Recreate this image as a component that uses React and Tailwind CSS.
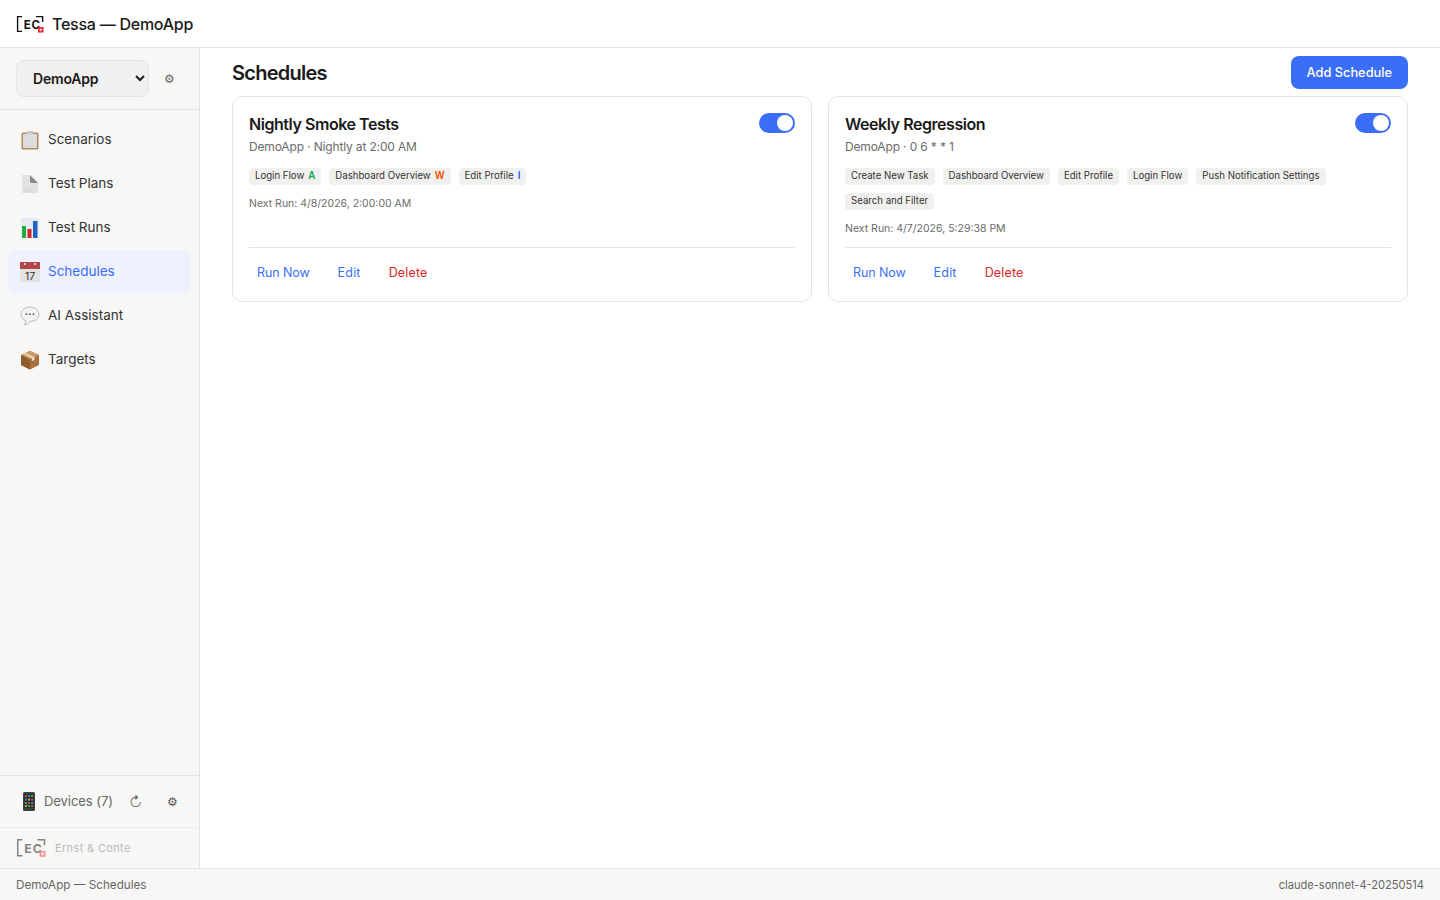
const Logo = ({ faded }) => {
  const ink = faded ? "#555" : "#111";
  const size = faded ? 30 : 28;
  return (
    <svg width={size} height={(size * 20) / 28} viewBox="0 0 28 20" className={faded ? "opacity-70" : ""}>
      <path d="M6 2.6H1.6V17.4H6" fill="none" stroke={ink} strokeWidth="1.4" />
      <path d="M20 2.6H26.6V8" fill="none" stroke={ink} strokeWidth="1.4" />
      <text x="7.8" y="14.5" fontSize="11.5" fontWeight="700" fontFamily="Inter, sans-serif" fill={ink}>E</text>
      <text x="15.6" y="14.5" fontSize="11.5" fontWeight="700" fontFamily="Inter, sans-serif" fill={ink}>C</text>
      <rect x="22" y="13" width="5.5" height="5.5" fill={faded ? "#f26d6d" : "#e8212b"} />
      <path d="M24.75 14.3V17.2M23.3 15.75H26.2" stroke="#fff" strokeWidth="0.9" />
    </svg>
  );
};

const ClipboardIcon = () => (
  <svg width="20" height="20" viewBox="0 0 20 20">
    <rect x="1.5" y="2.5" width="17" height="17" rx="1.5" fill="#b48a5c" />
    <rect x="3" y="4" width="14" height="14" fill="#dcdcdc" />
    <rect x="6.5" y="1" width="7" height="3" rx="1" fill="#c9c9c9" />
  </svg>
);

const PageIcon = () => (
  <svg width="20" height="20" viewBox="0 0 20 20">
    <path d="M2 1H10L18 9V19H2Z" fill="#e2e2e0" />
    <path d="M10 1L18 9H12C10.5 9 10 8 10 7Z" fill="#8a8a8a" />
    <path d="M4 15H10M4 17H13" stroke="#d0d0ce" strokeWidth="1" />
  </svg>
);

const ChartIcon = () => (
  <svg width="20" height="20" viewBox="0 0 20 20">
    <rect x="1" y="0" width="18" height="20" fill="#e4ebf2" />
    <rect x="2" y="8" width="4" height="12" fill="#1fae3f" />
    <rect x="7.5" y="11" width="4" height="9" fill="#d4252a" />
    <rect x="13" y="3" width="4.5" height="17" fill="#1e62c0" />
  </svg>
);

const CalendarIcon = () => (
  <svg width="20" height="20" viewBox="0 0 20 20">
    <rect x="0" y="0" width="20" height="20" fill="#e2e2e0" />
    <rect x="0" y="0" width="20" height="7" fill="#b5474c" />
    <circle cx="5" cy="2" r="1" fill="#eee" />
    <circle cx="15" cy="2" r="1" fill="#eee" />
    <text x="10" y="17.5" textAnchor="middle" fontSize="10.5" fontFamily="Inter, sans-serif" fill="#333">17</text>
  </svg>
);

const BubbleIcon = () => (
  <svg width="20" height="20" viewBox="0 0 20 20">
    <path d="M10 1C4.8 1 1 4.2 1 8.2C1 11.4 3.4 13.8 6 14.8C6 16 5.4 17.4 4 19C6.6 18.6 9 17 10.4 15.4C15.4 15.2 19 12.2 19 8.2C19 4.2 15.2 1 10 1Z" fill="#f2f3f3" stroke="#aeb1b3" strokeWidth="0.9" />
    <circle cx="6.5" cy="8.2" r="0.9" fill="#555" />
    <circle cx="10" cy="8.2" r="0.9" fill="#555" />
    <circle cx="13.5" cy="8.2" r="0.9" fill="#555" />
  </svg>
);

const BoxIcon = () => (
  <svg width="20" height="20" viewBox="0 0 20 20">
    <path d="M10 1L19 5V15L10 19.5L1 15V5Z" fill="#a8703c" />
    <path d="M10 1L19 5L10 9.5L1 5Z" fill="#cd9a66" />
    <path d="M10 9.5V19.5L1 15V5Z" fill="#8f5c30" />
    <path d="M5.5 3L14.5 7.2V10L12 11V8.3L3.5 4Z" fill="#e4dccf" />
  </svg>
);

const PhoneIcon = () => (
  <svg width="12" height="19" viewBox="0 0 12 19">
    <rect x="0" y="0" width="12" height="19" rx="1.5" fill="#3a4240" />
    <rect x="1.5" y="2" width="9" height="14" fill="#22302e" />
    <rect x="2" y="3" width="2" height="2" fill="#c74a3a" />
    <rect x="5" y="3" width="2" height="2" fill="#3a7bc7" />
    <rect x="8" y="3" width="2" height="2" fill="#4aa85a" />
    <rect x="2" y="6.5" width="2" height="2" fill="#3a7bc7" />
    <rect x="5" y="6.5" width="2" height="2" fill="#d1a32f" />
    <rect x="8" y="6.5" width="2" height="2" fill="#c74a3a" />
    <rect x="2" y="10" width="2" height="2" fill="#4aa85a" />
    <rect x="5" y="10" width="2" height="2" fill="#c74a3a" />
    <rect x="8" y="10" width="2" height="2" fill="#3a7bc7" />
    <rect x="2" y="13" width="2" height="2" fill="#d1a32f" />
    <rect x="5" y="13" width="2" height="2" fill="#4aa85a" />
    <rect x="8" y="13" width="2" height="2" fill="#c74a3a" />
  </svg>
);

const navItems = [
  { label: "Scenarios", icon: <ClipboardIcon /> },
  { label: "Test Plans", icon: <PageIcon /> },
  { label: "Test Runs", icon: <ChartIcon /> },
  { label: "Schedules", icon: <CalendarIcon />, active: true },
  { label: "AI Assistant", icon: <BubbleIcon /> },
  { label: "Targets", icon: <BoxIcon /> },
];

const schedules = [
  {
    name: "Nightly Smoke Tests",
    meta: "DemoApp · Nightly at 2:00 AM",
    next: "Next Run: 4/8/2026, 2:00:00 AM",
    tags: [
      { label: "Login Flow", mark: "A", color: "text-green-600" },
      { label: "Dashboard Overview", mark: "W", color: "text-orange-600" },
      { label: "Edit Profile", mark: "I", color: "text-blue-600" },
    ],
  },
  {
    name: "Weekly Regression",
    meta: "DemoApp · 0 6 * * 1",
    next: "Next Run: 4/7/2026, 5:29:38 PM",
    tags: [
      { label: "Create New Task" },
      { label: "Dashboard Overview" },
      { label: "Edit Profile" },
      { label: "Login Flow" },
      { label: "Push Notification Settings" },
      { label: "Search and Filter" },
    ],
  },
];

const ScheduleCard = ({ item }) => (
  <div className="flex flex-col rounded-[10px] border border-[#e5e5e3] bg-white px-4 pt-4 pb-[3px]">
    <div className="flex items-start justify-between">
      <div>
        <h3 className="text-[16px] leading-[22px] font-semibold tracking-[-0.45px] text-[#1a1a1a]">{item.name}</h3>
        <p className="mt-[3px] text-[12px] leading-[18px] tracking-[-0.15px] text-[#6b6b6b]">{item.meta}</p>
      </div>
      <div className="flex h-5 w-9 items-center justify-end rounded-full bg-[#3b6ef6] pr-[2px]">
        <div className="h-4 w-4 rounded-full bg-white" />
      </div>
    </div>
    <div className="mt-3 flex flex-wrap gap-2">
      {item.tags.map((tag) => (
        <span key={tag.label} className="flex h-[17px] items-center gap-1 rounded bg-[#f0f0ee] px-1.5 text-[9.65px] text-[#333]">
          {tag.label}
          {tag.mark && <span className={`font-semibold ${tag.color}`}>{tag.mark}</span>}
        </span>
      ))}
    </div>
    <p className="mt-[11px] mb-[10px] text-[10.5px] leading-[16px] text-[#6b6b6b]">{item.next}</p>
    <div className="mt-auto flex gap-3 border-t border-[#e5e5e3] pt-[12px] pb-[12px]">
      <button className="px-2 py-1 text-[12.5px] leading-[18px] tracking-[-0.1px] text-[#3b6ef6]">Run Now</button>
      <button className="px-2 py-1 text-[12.5px] leading-[18px] tracking-[0.2px] text-[#3b6ef6]">Edit</button>
      <button className="px-2 py-1 text-[12.5px] leading-[18px] tracking-[0.15px] text-[#dc2626]">Delete</button>
    </div>
  </div>
);

export default function App() {
  return (
    <div className="flex h-screen flex-col bg-white font-['Inter',sans-serif] text-[#1a1a1a]">
      <header className="flex h-12 shrink-0 items-center gap-2 border-b border-[#e5e5e3] pl-4">
        <Logo />
        <span className="pt-[1px] text-[16px] font-medium tracking-[-0.25px]">Tessa — DemoApp</span>
      </header>

      <div className="flex min-h-0 flex-1">
        <aside className="flex w-[200px] shrink-0 flex-col border-r border-[#e5e5e3] bg-[#f7f7f5]">
          <div className="flex h-[62px] items-center gap-3 border-b border-[#e5e5e3] pl-4">
            <select className="h-[37px] w-[133px] rounded-lg border border-[#e5e5e3] bg-[#f0f0ee] pl-3 text-[14px] font-semibold tracking-[-0.2px]">
              <option>DemoApp</option>
            </select>
            <span className="w-[16px] text-center text-[12px] text-[#666]">⚙</span>
          </div>

          <nav className="flex flex-1 flex-col gap-[1px] px-2 pt-2">
            {navItems.map((item) => (
              <a
                key={item.label}
                className={`flex h-[43px] items-center gap-2 rounded-lg pl-3 text-[13.5px] ${
                  item.active ? "bg-[#edf2fe] text-[#3b6ef6]" : "text-[#333]"
                }`}
              >
                <span className="flex w-5 justify-center">{item.icon}</span>
                {item.label}
              </a>
            ))}
          </nav>

          <div className="flex h-[52px] items-center border-t border-[#e5e5e3] pl-[23px] text-[13px] text-[#666]">
            <PhoneIcon />
            <span className="ml-[9px] tracking-[-0.05px]">Devices (7)</span>
            <span className="ml-[16px] text-[14px] font-light">↻</span>
            <span className="ml-[25px] text-[12px] text-[#555]">⚙</span>
          </div>

          <div className="flex h-[41px] items-center gap-[9px] border-t border-[#ececea] pl-4">
            <Logo faded />
            <span className="text-[11px] tracking-[0.35px] text-[#bbb]">Ernst &amp; Conte</span>
          </div>
        </aside>

        <main className="flex-1 px-8 pt-2">
          <div className="mb-[7px] flex h-[33px] items-center justify-between">
            <h2 className="text-[20px] font-semibold tracking-[-0.75px]">Schedules</h2>
            <button className="h-[33px] rounded-lg bg-[#3b6ef6] px-4 pt-[1px] text-[12.8px] font-medium text-white">Add Schedule</button>
          </div>
          <div className="grid grid-cols-2 gap-4">
            {schedules.map((item) => (
              <ScheduleCard key={item.name} item={item} />
            ))}
          </div>
        </main>
      </div>

      <footer className="flex h-8 shrink-0 items-center justify-between border-t border-[#e5e5e3] bg-[#f7f7f5] px-4 text-[#666]">
        <span className="pt-[2px] text-[11.7px]">DemoApp — Schedules</span>
        <span className="pt-[1px] text-[11.1px]">claude-sonnet-4-20250514</span>
      </footer>
    </div>
  );
}
